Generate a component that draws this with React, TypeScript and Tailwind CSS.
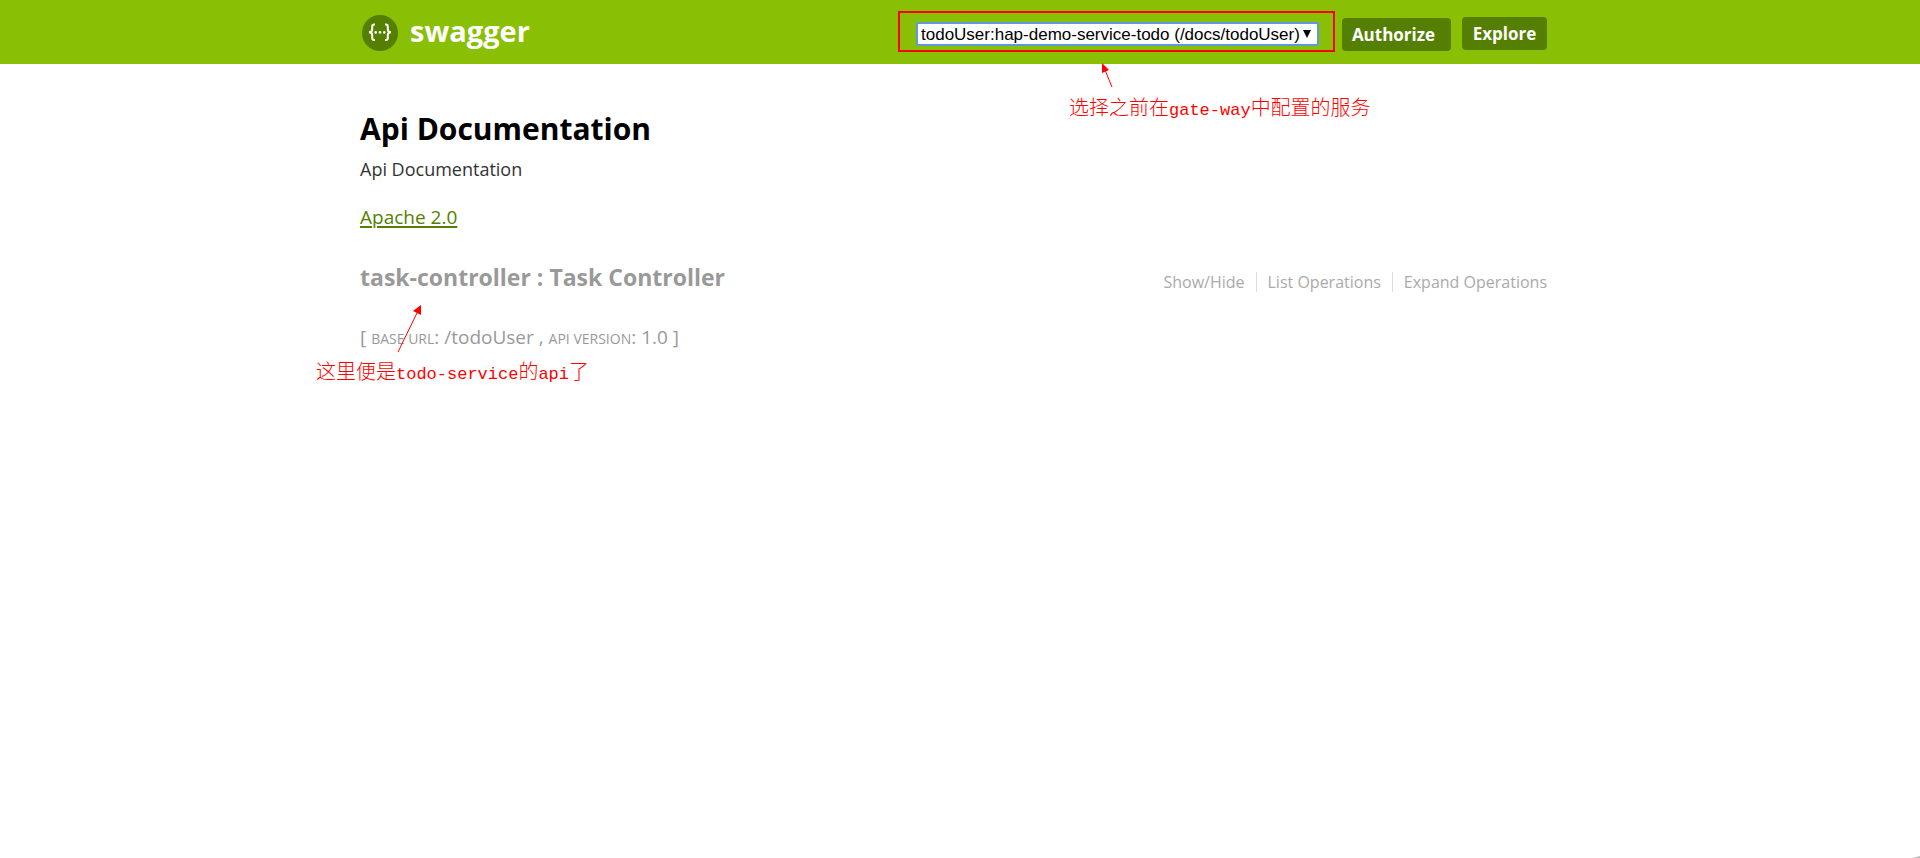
import type { ReactNode } from "react";

const services = ["todoUser:hap-demo-service-todo (/docs/todoUser)"];

function Logo() {
  return (
    <svg width="36" height="36" viewBox="0 0 36 36" aria-hidden="true">
      <circle cx="18" cy="18" r="18" fill="#547f00" />
      <g fill="none" stroke="#fff" strokeWidth="2">
        <path d="M13 9.5 H12.2 Q10.2 9.5 10.2 11.5 V14.5 Q10.2 17.3 7 17.3 Q10.2 17.3 10.2 20.1 V23.100 Q10.2 25.100 12.200 25.100 H13" />
        <path d="M23 9.5 H23.8 Q25.8 9.5 25.8 11.5 V14.5 Q25.8 17.3 29 17.3 Q25.8 17.3 25.8 20.1 V23.100 Q25.8 25.100 23.800 25.100 H23" />
      </g>
      <g fill="#fff">
        <circle cx="13.700" cy="17.400" r="1.300" />
        <circle cx="18" cy="17.400" r="1.300" />
        <circle cx="22.300" cy="17.400" r="1.300" />
      </g>
    </svg>
  );
}

function Latin({ children }: { children: ReactNode }) {
  return <span className="font-['Liberation_Mono',monospace] text-[17px] font-normal">{children}</span>;
}

function Note({ children }: { children: ReactNode }) {
  return (
    <p className="font-['Noto_Sans_CJK_SC',sans-serif] text-xl/6 font-light whitespace-nowrap text-[#ff0000]">
      {children}
    </p>
  );
}

export default function App() {
  return (
    <div className="min-h-screen bg-white font-['Open_Sans',sans-serif] text-[#333333]">
      <header className="bg-[#89bf04]">
        <div className="mx-auto flex h-16 max-w-[1200px] items-center justify-between pr-[13px]">
          <a href="#top" className="flex items-center gap-3 pt-0.5 pl-0.5 text-[29px]/9 font-bold text-white">
            <Logo />
            <span className="pb-1">swagger</span>
          </a>
          <form className="flex items-center" onSubmit={(e) => e.preventDefault()}>
            <div className="relative mt-1 mr-[23px] flex items-center">
              <select
                aria-label="Service"
                className="h-6 w-[403px] appearance-none rounded-xs border-2 border-[#5f9ad8] bg-white pt-px pl-[3px] font-['Liberation_Sans',sans-serif] text-[17px]/5 text-black outline-none"
              >
                {services.map((s) => (
                  <option key={s}>{s}</option>
                ))}
              </select>
              <svg
                className="pointer-events-none absolute right-2"
                width="8"
                height="8"
                viewBox="0 0 8 8"
                aria-hidden="true"
              >
                <path d="M0 0 H8 L4 8 Z" fill="#000" />
              </svg>
              <div className="pointer-events-none absolute -top-[11px] -right-4 -bottom-1.5 -left-[18px] border-2 border-[#ff0000]" />
            </div>
            <button type="button" className="mt-1 mr-[11px] h-[33px] w-[109px] rounded bg-[#547f00] pt-0.5 pr-1.5 text-[17px] font-bold text-white">
              Authorize
            </button>
            <button type="submit" className="mt-0.5 h-[33px] w-[85px] rounded bg-[#547f00] pt-0.5 text-[17px] font-bold text-white">
              Explore
            </button>
          </form>
        </div>
      </header>

      <main id="top" className="relative mx-auto max-w-[1200px] pt-[43px] pr-[13px]">
        <h1 className="text-3xl/11 font-bold text-black">Api Documentation</h1>
        <p className="pt-1 text-lg/7">Api Documentation</p>
        <p className="pt-5 text-[19px]/7">
          <a href="#license" className="text-[#547f00] underline decoration-2 underline-offset-2">
            Apache 2.0
          </a>
        </p>

        <section className="flex items-center justify-between pt-7 text-[#999999]">
          <h2 className="text-[23px]/9 font-bold">
            <a href="#task-controller">task-controller : Task Controller</a>
          </h2>
          <ul className="flex pt-2.5 text-base/5 text-[#aaaaaa]">
            <li className="border-r border-[#dddddd] pr-[11px]">
              <a href="#toggle">Show/Hide</a>
            </li>
            <li className="border-r border-[#dddddd] px-[11px]">
              <a href="#list">List Operations</a>
            </li>
            <li className="pl-[11px]">
              <a href="#expand">Expand Operations</a>
            </li>
          </ul>
        </section>

        <p className="pt-7 text-[19px]/7 text-[#999999]">
          [ <span className="text-sm">BASE URL</span>: /todoUser , <span className="text-sm">API VERSION</span>: 1.0 ]
        </p>

        <div className="-ml-11 pt-2">
          <Note>
            这里便是<Latin>todo-service</Latin>的<Latin>api</Latin>了
          </Note>
        </div>

        <div className="absolute top-[31px] left-[709px]">
          <Note>
            选择之前在<Latin>gate-way</Latin>中配置的服务
          </Note>
        </div>
        <svg className="absolute -top-px left-[740px]" width="14" height="26" viewBox="0 0 14 26" aria-hidden="true">
          <path d="M2 0 L2 10 L9 7 Z" fill="#f00" />
          <path d="M5 7 L12 24" stroke="#f00" strokeWidth="1" />
        </svg>
        <svg className="absolute top-60 left-9" width="28" height="50" viewBox="0 0 28 50" aria-hidden="true">
          <path d="M25 1 L17 7 L25 11 Z" fill="#f00" />
          <path d="M21 9 L2 48" stroke="#f00" strokeWidth="1" />
        </svg>
      </main>

      <svg className="fixed right-0 bottom-0" width="8" height="3" viewBox="0 0 8 3" aria-hidden="true">
        <path d="M0 3 L8 1 V3 Z" fill="#bbb" />
      </svg>
    </div>
  );
}
